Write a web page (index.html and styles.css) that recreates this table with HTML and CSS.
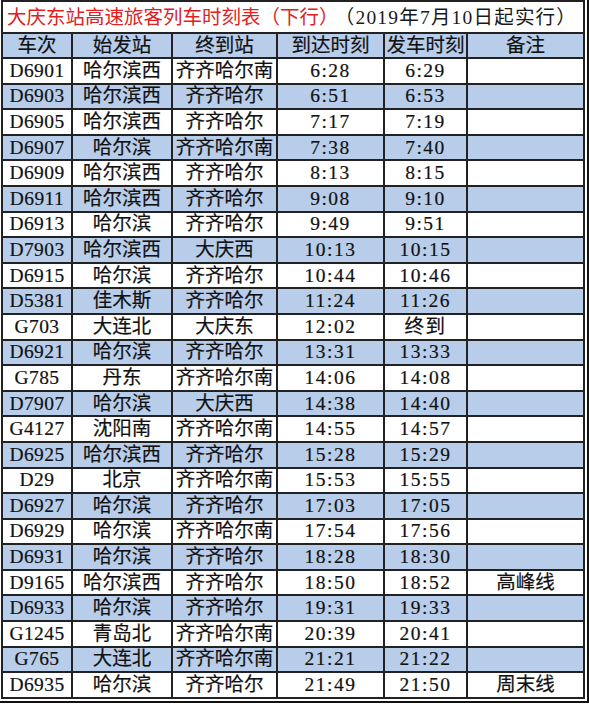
FILE: index.html
```html
<!DOCTYPE html>
<html lang="zh-CN">
<head>
<meta charset="utf-8">
<title>大庆东站高速旅客列车时刻表（下行）</title>
<link rel="stylesheet" href="styles.css">
</head>
<body>
<div class="frame">
<table class="timetable">
<colgroup>
<col class="c-no"><col class="c-from"><col class="c-to"><col class="c-arr"><col class="c-dep"><col class="c-note">
</colgroup>
<thead>
<tr class="title-row"><th colspan="6" class="title"><span class="title-main">大庆东站高速旅客列车时刻表（下行）</span><span class="title-date">（2019年7月10日起实行）</span></th></tr>
<tr class="head"><th>车次</th><th>始发站</th><th>终到站</th><th>到达时刻</th><th>发车时刻</th><th>备注</th></tr>
</thead>
<tbody>
<tr><td>D6901</td><td>哈尔滨西</td><td>齐齐哈尔南</td><td>6:28</td><td>6:29</td><td></td></tr>
<tr><td>D6903</td><td>哈尔滨西</td><td>齐齐哈尔</td><td>6:51</td><td>6:53</td><td></td></tr>
<tr><td>D6905</td><td>哈尔滨西</td><td>齐齐哈尔</td><td>7:17</td><td>7:19</td><td></td></tr>
<tr><td>D6907</td><td>哈尔滨</td><td>齐齐哈尔南</td><td>7:38</td><td>7:40</td><td></td></tr>
<tr><td>D6909</td><td>哈尔滨西</td><td>齐齐哈尔</td><td>8:13</td><td>8:15</td><td></td></tr>
<tr><td>D6911</td><td>哈尔滨西</td><td>齐齐哈尔</td><td>9:08</td><td>9:10</td><td></td></tr>
<tr><td>D6913</td><td>哈尔滨</td><td>齐齐哈尔</td><td>9:49</td><td>9:51</td><td></td></tr>
<tr><td>D7903</td><td>哈尔滨西</td><td>大庆西</td><td>10:13</td><td>10:15</td><td></td></tr>
<tr><td>D6915</td><td>哈尔滨</td><td>齐齐哈尔</td><td>10:44</td><td>10:46</td><td></td></tr>
<tr><td>D5381</td><td>佳木斯</td><td>齐齐哈尔</td><td>11:24</td><td>11:26</td><td></td></tr>
<tr><td>G703</td><td>大连北</td><td>大庆东</td><td>12:02</td><td>终到</td><td></td></tr>
<tr><td>D6921</td><td>哈尔滨</td><td>齐齐哈尔</td><td>13:31</td><td>13:33</td><td></td></tr>
<tr><td>G785</td><td>丹东</td><td>齐齐哈尔南</td><td>14:06</td><td>14:08</td><td></td></tr>
<tr><td>D7907</td><td>哈尔滨</td><td>大庆西</td><td>14:38</td><td>14:40</td><td></td></tr>
<tr><td>G4127</td><td>沈阳南</td><td>齐齐哈尔南</td><td>14:55</td><td>14:57</td><td></td></tr>
<tr><td>D6925</td><td>哈尔滨西</td><td>齐齐哈尔</td><td>15:28</td><td>15:29</td><td></td></tr>
<tr><td>D29</td><td>北京</td><td>齐齐哈尔南</td><td>15:53</td><td>15:55</td><td></td></tr>
<tr><td>D6927</td><td>哈尔滨</td><td>齐齐哈尔</td><td>17:03</td><td>17:05</td><td></td></tr>
<tr><td>D6929</td><td>哈尔滨</td><td>齐齐哈尔南</td><td>17:54</td><td>17:56</td><td></td></tr>
<tr><td>D6931</td><td>哈尔滨</td><td>齐齐哈尔</td><td>18:28</td><td>18:30</td><td></td></tr>
<tr><td>D9165</td><td>哈尔滨西</td><td>齐齐哈尔</td><td>18:50</td><td>18:52</td><td>高峰线</td></tr>
<tr><td>D6933</td><td>哈尔滨</td><td>齐齐哈尔</td><td>19:31</td><td>19:33</td><td></td></tr>
<tr><td>G1245</td><td>青岛北</td><td>齐齐哈尔南</td><td>20:39</td><td>20:41</td><td></td></tr>
<tr><td>G765</td><td>大连北</td><td>齐齐哈尔南</td><td>21:21</td><td>21:22</td><td></td></tr>
<tr><td>D6935</td><td>哈尔滨</td><td>齐齐哈尔</td><td>21:49</td><td>21:50</td><td>周末线</td></tr>
</tbody>
</table>
</div>
</body>
</html>
```

FILE: styles.css
```css
html, body {
  margin: 0;
  padding: 0;
  background: #ffffff;
}

.frame {
  width: 585px;
  padding: 0 1px 2px 1px;
  border-right: 2px solid #111111;
  border-bottom: 2px solid #111111;
}

.timetable {
  width: 584px;
  table-layout: fixed;
  border-collapse: collapse;
  font-family: "Liberation Serif", "Noto Sans CJK SC", serif;
  font-size: 19.5px;
  color: #111111;
}

.c-no { width: 70px; }
.c-from { width: 100px; }
.c-to { width: 105px; }
.c-arr { width: 107px; }
.c-dep { width: 83px; }
.c-note { width: 117px; }

.timetable th,
.timetable td {
  border: 2px solid #222222;
  padding: 0;
  text-align: center;
  vertical-align: middle;
  font-weight: normal;
  line-height: 22px;
  white-space: nowrap;
  overflow: hidden;
  -webkit-text-stroke: 0.2px #111111;
}

.title-row { height: 31px; }

.timetable th.title {
  text-align: left;
  padding-left: 4px;
  line-height: 28px;
  -webkit-text-stroke: 0;
}

.title-main {
  font-family: "Noto Sans CJK SC", sans-serif;
  color: #e0211f;
}

.title-date {
  color: #1a1a1a;
  margin-left: 6px;
  letter-spacing: 1.2px;
}

.head { height: 25px; }
.head th { background: #b8cde9; }

.timetable tbody tr { height: 25.6px; }
.timetable tbody tr:nth-child(even) td { background: #b8cde9; }

.timetable td:nth-child(1) { letter-spacing: 0.4px; }
.timetable td:nth-child(4),
.timetable td:nth-child(5) { letter-spacing: 1.5px; }
```
